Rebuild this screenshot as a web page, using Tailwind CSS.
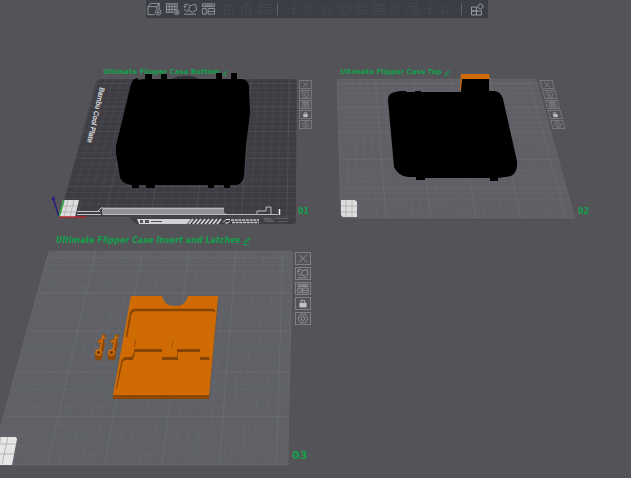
<!DOCTYPE html>
<html lang="en">
<head>
  <meta charset="UTF-8" />
  <meta name="viewport" content="width=device-width, initial-scale=1.0"/>
  <title>Ultimate Flipper Case | Plates</title>
  <script src="https://cdn.jsdelivr.net/npm/@tailwindcss/browser@4"></script>
</head>
<body class="bg-[#545358] min-h-screen overflow-hidden font-['DejaVu_Sans',sans-serif]">

  <!-- Icon symbols -->
  <svg class="hidden">
    <symbol id="i-cube" viewBox="0 0 16 14"><path d="M1 4.500 4 1h9l-2.500 3.500zM1 4.500V13h7M10.500 4.500V7M13 1v6M10.500 4.500 13 1"/><circle cx="12" cy="10.500" r="3"/><path d="M12 9v3M10.500 10.500h3"/></symbol>
    <symbol id="i-grid" viewBox="0 0 16 14"><path d="M1 1.500h12M1 4.500h12M1 7.500h12M1 10.500h8M1.500 1v10M4.500 1v10M7.500 1v10M10.500 1v7M13 1v6"/><circle cx="12.500" cy="10.500" r="2.500"/><path d="M12.500 9v3M11 10.500h3"/></symbol>
    <symbol id="i-orient" viewBox="0 0 16 14"><path d="M7 3.500 13.500 2l1 6-4.500 2.500-4-2zM1 12.500h13M1 7l3 2.500 2-1M6 2H2v3M1 4l1 1.500L3.500 4"/></symbol>
    <symbol id="i-arrange" viewBox="0 0 16 14"><path d="M1.500 1.500h13v3h-13zM1.500 6.500h4v6h-4zM7.500 6.500h7v6h-7zM7.500 9.500h7M3.500 3h9"/></symbol>
    <symbol id="i-box" viewBox="0 0 16 14"><path d="M3.500 3.500h9v9h-9zM6 1.500h4M8 5.500v5"/></symbol>
    <symbol id="i-list" viewBox="0 0 16 14"><path d="M2 2.500h12v9H2zM2 5.500h12M2 8.500h12"/></symbol>
    <symbol id="i-move" viewBox="0 0 16 14"><path d="M8 1v12M2 7h12M6 3l2-2 2 2M6 11l2 2 2-2"/></symbol>
    <symbol id="i-ring" viewBox="0 0 16 14"><circle cx="8" cy="7" r="5"/><path d="M8 2v3M5 9l6-4"/></symbol>
    <symbol id="i-cut" viewBox="0 0 16 14"><path d="M3 12 13 2M3 5h6v7H3zM11 8l3 3"/></symbol>
    <symbol id="i-parts" viewBox="0 0 16 14"><path d="M2.500 4.500h5v4h-5zM2.500 8.500h5v4h-5zM7.500 8.500h5v4h-5zM11 1l3.500 2.500L12 7 8.500 4.500z"/></symbol>
    <symbol id="i-close" viewBox="0 0 16 14"><path d="m3 2 10 10M13 2 3 12"/></symbol>
    <symbol id="i-lock" viewBox="0 0 16 14"><path d="M4 6.500h8v5H4z" fill="currentColor"/><path d="M5.500 6V3h4.500v3"/></symbol>
    <symbol id="i-gear" viewBox="0 0 16 14"><path d="M5 1.500h6L14.500 7 11 12.500H5L1.500 7z"/><circle cx="8" cy="7" r="2.500"/></symbol>
    <symbol id="i-pen" viewBox="0 0 10 8"><path d="m2 6 1-2 4-3 1 1-4 3zM1 7.500h6"/></symbol>
  </svg>

  <!-- Toolbar -->
  <header class="flex justify-center pl-[3px]">
    <div class="flex items-center h-[18px] pl-px pr-[3px] bg-[#3b3e44] fill-none stroke-current text-[#96999d]">
      <div class="flex gap-[3px]">
        <button aria-label="Add" class="w-[15px] h-[14px]"><svg class="size-full"><use href="#i-cube"/></svg></button>
        <button aria-label="Add plate" class="w-[15px] h-[14px]"><svg class="size-full"><use href="#i-grid"/></svg></button>
        <button aria-label="Auto orient" class="w-[15px] h-[14px]"><svg class="size-full"><use href="#i-orient"/></svg></button>
        <button aria-label="Arrange" class="w-[15px] h-[14px]"><svg class="size-full"><use href="#i-arrange"/></svg></button>
      </div>
      <div class="flex gap-[3px] ml-[5px] text-[#484b50]">
        <button disabled aria-label="Copy" class="w-[15px] h-[14px]"><svg class="size-full"><use href="#i-box"/></svg></button>
        <button disabled aria-label="Paste" class="w-[15px] h-[14px]"><svg class="size-full"><use href="#i-box"/></svg></button>
        <button disabled aria-label="Layers" class="w-[15px] h-[14px]"><svg class="size-full"><use href="#i-list"/></svg></button>
      </div>
      <div class="w-px h-3 mx-[5px] bg-[#606368]"></div>
      <div class="flex gap-[2px] ml-[3px] text-[#44474d]">
        <button disabled aria-label="Move" class="w-[15px] h-[14px]"><svg class="size-full"><use href="#i-move"/></svg></button>
        <button disabled aria-label="Rotate" class="w-[15px] h-[14px]"><svg class="size-full"><use href="#i-ring"/></svg></button>
        <button disabled aria-label="Scale" class="w-[15px] h-[14px]"><svg class="size-full"><use href="#i-cut"/></svg></button>
        <button disabled aria-label="Flatten" class="w-[15px] h-[14px]"><svg class="size-full"><use href="#i-orient"/></svg></button>
        <button disabled aria-label="Cut" class="w-[15px] h-[14px]"><svg class="size-full"><use href="#i-list"/></svg></button>
        <button disabled aria-label="Boolean" class="w-[15px] h-[14px]"><svg class="size-full"><use href="#i-arrange"/></svg></button>
        <button disabled aria-label="Supports" class="w-[15px] h-[14px]"><svg class="size-full"><use href="#i-box"/></svg></button>
        <button disabled aria-label="Seam" class="w-[15px] h-[14px]"><svg class="size-full"><use href="#i-cube"/></svg></button>
        <button disabled aria-label="Text" class="w-[15px] h-[14px]"><svg class="size-full"><use href="#i-move"/></svg></button>
        <button disabled aria-label="Measure" class="w-[15px] h-[14px]"><svg class="size-full"><use href="#i-cut"/></svg></button>
      </div>
      <div class="w-px h-3 mx-[7px] bg-[#606368]"></div>
      <button aria-label="Assembly view" class="w-[16px] h-[15px]"><svg class="size-full"><use href="#i-parts"/></svg></button>
    </div>
  </header>

  <!-- 3D view, everything is placed on a free canvas -->
  <main class="absolute left-0 top-0 -z-10">
    <svg width="631" height="478" class="block max-w-none overflow-visible">
      <!-- Plate 01 -->
      <path d="M101 79H294q3 0 3 3L296 221q0 3-4 3H137l-9-7H59L96 82q1-3 5-3z" fill="#3e3d43"/>
      <g id="grid1" stroke="#77767c"></g>
      <text transform="translate(100 87) rotate(103)" font-family="Liberation Sans, sans-serif" font-size="7" fill="#d0d0d2" stroke="#d0d0d2" stroke-width=".3">Bambu Cool Plate</text>
      <path d="M63 200h16l-4 17H59z" fill="#dddcdd"/>
      <path d="M68 200l-4 17M74 200l-4 17M62 206h16M60 212h16" stroke="#a9a8aa" stroke-width=".7"/>
      <path d="M77 211.500h23M77 214.500h24M97 212l4-4h2" stroke="#c4c4c6" fill="none"/>
      <path d="M102 207.500h122v5l4 2H102z" fill="#929195"/>
      <path d="M103 208.500h121M103 214.500h175M257 214v-3h9v-4h5v7" stroke="#bbbabd" fill="none"/>
      <path d="M279.500 209v6" stroke="#eee" stroke-width="1.500"/>
      <path d="M137 219h54l-4 5h-48z" fill="#d2d1d4"/>
      <path d="M140 220h3v3h-3zM145 220h4v3h-4zM151 221h11v1h-11z" fill="#55545a"/>
      <path d="M189 224l4-5M193 224l4-5M197 224l4-5M201 224l4-5M205 224l4-5M209 224l4-5M213 224l4-5M217 224l4-5" stroke="#cfced1" stroke-width="2"/>
      <path d="M223 222.500l3-3h4M225 223h3l2-2" stroke="#ddd" fill="none"/>
      <path d="M231 220h28M232 222.500h27" stroke="#cbcacd" stroke-width="1.500" stroke-dasharray="3 .7"/>
      <path d="M264 218.500h7l3 3h-9zM275 218.500h13M278 221.500h9" stroke="#605f65" fill="#55545a"/>
      <path d="M59 217 53 198" stroke="#25207d" stroke-width="1.500"/>
      <path d="M51.500 200 53 196l2.500 3z" fill="#25207d"/>
      <path d="M59 217l5-17" stroke="#2aa53a" stroke-width="1.500"/>
      <path d="M59 217h27" stroke="#b3262b" stroke-width="1.500"/>
      <path d="M172 79q7-4 20-3l8 3z" fill="#343339"/>
      <path d="M138 80l7-1v-5h7v5h9v-5h6v5h49v-6h6v6h9v-6h6v6h5q6 1 7 7l1 27-4 33-2 31q-2 7-8 8h-6v3h-6v-3h-10v3h-6v-3h-53v3h-9v-3h-7v3h-7v-3l-5-1q-6-2-7-7l-4-24v-7l15-62q2-6 7-6z" fill="#000"/>

      <!-- Plate 02 -->
      <path d="M337 79H534l3 3 38 136H341z" fill="#5f6065"/>
      <g id="grid2" stroke="#83848a"></g>
      <path d="M341 200h14l2 2v15h-14l-2-2z" fill="#dddcdd"/>
      <path d="M346 200v17M352 200v17M341 206h16M341 212h16" stroke="#aaa9ab" stroke-width=".7"/>
      <path d="M461 79h28v12h6q6 1 8 8l14 62q1 11-6 15l-13 2v3h-8v-3h-65v2h-9v-3h-8q-10-1-14-10l-6-67q0-7 7-8l5-1h6v1h9v-1h6v1h40z" fill="#000"/>
      <path d="M461 74h28l1 5h-28l-1 12-1-1z" fill="#d06a08"/>

      <!-- Plate 03 -->
      <path d="M52 251H290q3 0 3 3L288 465H-10L48 254q1-3 4-3z" fill="#5f6166"/>
      <g id="grid3" stroke="#83858a"></g>
      <path d="M-4 437h20l1 2-5 26h-20z" fill="#e6e6e7"/>
      <path d="M1 437l-6 27M8 437l-6 27M0 444h16M0 454h14" stroke="#a9a9ac" stroke-width=".8"/>
      <path d="M113 395h96l9-99v4l-9 99h-96z" fill="#8d4603"/>
      <path d="M131 296h31q2 10 13 10 11 0 13-10h30l-9 99h-96z" fill="#d06b04"/>
      <path d="M126 337l4-24q1-4 5-4h77q3 0 3 3l-1 0q0-1-3-1h-75q-4 0-5 4l-4 22z" fill="#874404" stroke="#874404" stroke-width=".5"/>
      <path d="M134 349h28v3h-28zM162 357h16v3h-16zM177 349h23v3h-23zM200 357h9l1 3h-10zM124 357h8l2-5 1 1-2 7h-7q-3 0-4 4l-5 25h-1l5-27q1-4 4-5z" fill="#874404"/>
      <path d="M135.500 340l-1 7M173 341l-1 6M178 352l-1 5" stroke="#9b4d05" fill="none"/>
      <g id="latch">
        <path d="M95 352v7q4 3 7 0l1-7 2-8-1-3 2-6-3-1-1 4-5 3 3 3-1 7z" fill="#914904"/>
        <circle cx="98.500" cy="352.500" r="2.500" fill="#6e3a0a" stroke="#d0700d" stroke-width="1.500"/>
        <path d="M100 350l2-9M98 342l4-2 1-5M103 337l2 1" stroke="#cf6e0d" stroke-width="1.500" fill="none"/>
      </g>
      <use href="#latch" x="13"/>
    </svg>

    <!-- Plate names -->
    <h2 class="absolute left-[103px] top-[68px] flex items-center gap-px whitespace-nowrap text-[7px] leading-[9px] font-bold text-[#12a04b] -z-10">Ultimate Flipper Case Bottom
      <svg class="w-[9px] h-[6px] fill-none stroke-current"><use href="#i-pen"/></svg></h2>
    <h2 class="absolute left-[340px] top-[68px] flex items-center gap-px whitespace-nowrap text-[7px] leading-[9px] font-bold text-[#12a04b]">Ultimate Flipper Case Top
      <svg class="w-[9px] h-[6px] fill-none stroke-current"><use href="#i-pen"/></svg></h2>
    <h2 class="absolute left-[56px] top-[236px] flex items-center gap-[2px] whitespace-nowrap text-[8px] leading-[10px] font-bold italic text-[#12a04b]">Ultimate Flipper Case Insert and Latches
      <svg class="w-[10px] h-[8px] fill-none stroke-current"><use href="#i-pen"/></svg></h2>

    <!-- Plate numbers -->
    <span class="absolute left-[298px] top-[207px] text-[8px] leading-[10px] font-bold text-[#12a04b]">01</span>
    <span class="absolute left-[578px] top-[207px] text-[8px] leading-[10px] font-bold text-[#12a04b]">02</span>
    <span class="absolute left-[292px] top-[449px] text-[11px] leading-[13px] font-bold text-[#12a04b]">03</span>

    <!-- Plate buttons -->
    <div class="absolute left-[299px] top-[80px] flex flex-col gap-px fill-none stroke-current text-[#96969a]">
      <button aria-label="Remove plate 01" class="w-[13px] h-[9px] border border-[#77777b]"><svg class="block size-full"><use href="#i-close"/></svg></button>
      <button aria-label="Orient plate 01" class="w-[13px] h-[9px] border border-[#77777b]"><svg class="block size-full"><use href="#i-orient"/></svg></button>
      <button aria-label="Arrange plate 01" class="w-[13px] h-[9px] border border-[#77777b]"><svg class="block size-full"><use href="#i-arrange"/></svg></button>
      <button aria-label="Lock plate 01" class="w-[13px] h-[9px] border border-[#77777b] text-[#c4c4c6]"><svg class="block size-full"><use href="#i-lock"/></svg></button>
      <button aria-label="Plate 01 settings" class="w-[13px] h-[9px] border border-[#77777b]"><svg class="block size-full"><use href="#i-gear"/></svg></button>
    </div>
    <div class="absolute left-[546px] top-[80px] flex flex-col gap-px skew-x-[15deg] fill-none stroke-current text-[#96969a]">
      <button aria-label="Remove plate 02" class="w-[13px] h-[9px] border border-[#77777b]"><svg class="block size-full"><use href="#i-close"/></svg></button>
      <button aria-label="Orient plate 02" class="w-[13px] h-[9px] border border-[#77777b]"><svg class="block size-full"><use href="#i-orient"/></svg></button>
      <button aria-label="Arrange plate 02" class="w-[13px] h-[9px] border border-[#77777b]"><svg class="block size-full"><use href="#i-arrange"/></svg></button>
      <button aria-label="Lock plate 02" class="w-[13px] h-[9px] border border-[#77777b] text-[#c4c4c6]"><svg class="block size-full"><use href="#i-lock"/></svg></button>
      <button aria-label="Plate 02 settings" class="w-[13px] h-[9px] border border-[#77777b]"><svg class="block size-full"><use href="#i-gear"/></svg></button>
    </div>
    <div class="absolute left-[295px] top-[252px] flex flex-col gap-[2px] fill-none stroke-current text-[#a2a2a6]">
      <button aria-label="Remove plate 03" class="w-[16px] h-[13px] border border-[#808084]"><svg class="block size-full"><use href="#i-close"/></svg></button>
      <button aria-label="Orient plate 03" class="w-[16px] h-[13px] border border-[#808084]"><svg class="block size-full"><use href="#i-orient"/></svg></button>
      <button aria-label="Arrange plate 03" class="w-[16px] h-[13px] border border-[#808084]"><svg class="block size-full"><use href="#i-arrange"/></svg></button>
      <button aria-label="Lock plate 03" class="w-[16px] h-[13px] border border-[#808084] text-[#c4c4c6]"><svg class="block size-full"><use href="#i-lock"/></svg></button>
      <button aria-label="Plate 03 settings" class="w-[16px] h-[13px] border border-[#808084]"><svg class="block size-full"><use href="#i-gear"/></svg></button>
    </div>
  </main>

  <script>
    // plate corners: top y, bottom y, left/right x on each edge
    const plates = [
      { id: 'grid1', top: 79, bottom: 217, tl: 98, tr: 297, bl: 59, br: 296 },
      { id: 'grid2', top: 79, bottom: 218, tl: 337, tr: 536, bl: 341, br: 575 },
      { id: 'grid3', top: 251, bottom: 465, tl: 49, tr: 292, bl: -10, br: 288 }
    ];
    const cells = 26;

    function drawGrid(p) {
      const k = (p.br - p.bl) / (p.tr - p.tl);
      let out = '';
      for (let i = 0; i <= cells; i++) {
        const t = i / cells;
        const x1 = p.tl + (p.tr - p.tl) * t;
        const x2 = p.bl + (p.br - p.bl) * t;
        out += `<path d="M${x1} ${p.top}L${x2} ${p.bottom}" stroke-width=".7" opacity="${i % 5 === 0 ? 0.4 : 0.2}"/>`;

        // rows get closer together towards the back
        const f = t / (t + (1 - t) * k);
        const y = p.top + (p.bottom - p.top) * f;
        const l = p.tl + (p.bl - p.tl) * f;
        const r = p.tr + (p.br - p.tr) * f;
        out += `<path d="M${l} ${y}H${r}" stroke-width=".7" opacity="${(cells - i) % 5 === 0 ? 0.4 : 0.2}"/>`;
      }
      document.getElementById(p.id).innerHTML = out;
    }

    plates.forEach(drawGrid);
  </script>
</body>
</html>
